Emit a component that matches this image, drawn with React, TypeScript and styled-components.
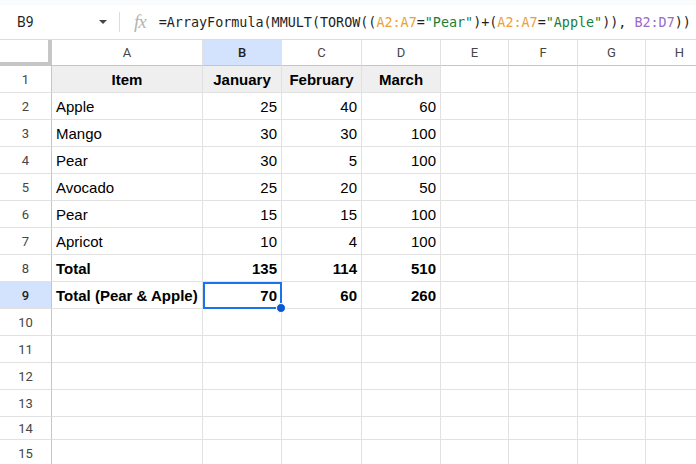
import React from "react";
import styled, { createGlobalStyle, css } from "styled-components";

const GlobalStyle = createGlobalStyle`
  body {
    margin: 0;
    background: #ffffff;
    overflow: hidden;
  }
`;

const Page = styled.div`
  width: 696px;
  height: 464px;
  overflow: hidden;
  background: #fff;
  font-family: Roboto, "Liberation Sans", Arial, sans-serif;
`;

const TopStrip = styled.div`
  height: 5px;
  background: #f9fbfd;
`;

const FormulaBar = styled.div`
  display: flex;
  align-items: center;
  height: 34px;
  border-bottom: 1px solid #dadce0;
  background: #fff;
`;

const NameBox = styled.div`
  width: 93px;
  padding-left: 17px;
  box-sizing: border-box;
  font-size: 14px;
  color: #1f1f1f;
`;

const Caret = styled.div`
  width: 0;
  height: 0;
  border-left: 4px solid transparent;
  border-right: 4px solid transparent;
  border-top: 4px solid #444746;
  margin-left: 6px;
`;

const Divider = styled.div`
  width: 1px;
  height: 20px;
  background: #dadce0;
  margin-left: 12px;
`;

const Fx = styled.span`
  font-family: "Liberation Serif", serif;
  font-style: italic;
  font-size: 19px;
  color: #b4b4b4;
  margin-left: 14px;
  letter-spacing: -1px;
`;

const Formula = styled.div`
  margin-left: 13px;
  font-family: "DejaVu Sans Mono", "Liberation Mono", monospace;
  font-size: 13.4px;
  color: #1f1f1f;
  white-space: nowrap;
`;

const Tok = styled.span<{ $c: string }>`
  color: ${(p) => p.$c};
`;

const Grid = styled.div`
  display: grid;
  grid-template-columns: 52px 151px 79px 80px 79px 68px 69px 68px 68px;
  grid-template-rows: 26px repeat(13, 27px) 23px 27px;
  width: 714px;
`;

const ColHead = styled.div<{ $active?: boolean }>`
  box-sizing: border-box;
  border-right: 1px solid #e1e1e1;
  border-bottom: 1px solid #c4c7c5;
  display: flex;
  align-items: center;
  justify-content: center;
  font-size: 13px;
  color: #444746;
  background: ${(p) => (p.$active ? "#d3e3fd" : "#fff")};
  ${(p) =>
    p.$active &&
    css`
      color: #1f1f1f;
      font-weight: 500;
    `}
`;

const Corner = styled.div`
  box-sizing: border-box;
  border-right: 4px solid #c4c7c5;
  border-bottom: 4px solid #c4c7c5;
  background: #fff;
`;

const RowHead = styled.div<{ $active?: boolean }>`
  box-sizing: border-box;
  border-right: 1px solid #c4c7c5;
  border-bottom: 1px solid #e1e1e1;
  display: flex;
  align-items: center;
  justify-content: center;
  font-size: 13px;
  color: ${(p) => (p.$active ? "#1f1f1f" : "#444746")};
  font-weight: ${(p) => (p.$active ? 500 : 400)};
  background: ${(p) => (p.$active ? "#d3e3fd" : "#fff")};
`;

const Cell = styled.div<{ $num?: boolean; $bold?: boolean; $head?: boolean; $sel?: boolean }>`
  position: relative;
  box-sizing: border-box;
  border-right: 1px solid #e1e1e1;
  border-bottom: 1px solid #e1e1e1;
  display: flex;
  align-items: center;
  padding: 0 4px;
  font-family: "Liberation Sans", Arial, sans-serif;
  font-size: 15px;
  color: #000;
  white-space: nowrap;
  justify-content: ${(p) => (p.$head ? "center" : p.$num ? "flex-end" : "flex-start")};
  font-weight: ${(p) => (p.$bold || p.$head ? 700 : 400)};
  background: ${(p) => (p.$head ? "#efefef" : "#fff")};
  ${(p) =>
    p.$sel &&
    css`
      outline: 2px solid #1a73e8;
      outline-offset: -2px;
    `}
`;

const Handle = styled.div`
  position: absolute;
  right: -5px;
  bottom: -5px;
  width: 8px;
  height: 8px;
  border-radius: 50%;
  background: #0b57d0;
  border: 1px solid #fff;
  z-index: 2;
`;

const cols = ["A", "B", "C", "D", "E", "F", "G", "H"];

type Row = { cells: (string | number)[]; bold?: boolean; head?: boolean };

const data: Row[] = [
  { cells: ["Item", "January", "February", "March"], head: true },
  { cells: ["Apple", 25, 40, 60] },
  { cells: ["Mango", 30, 30, 100] },
  { cells: ["Pear", 30, 5, 100] },
  { cells: ["Avocado", 25, 20, 50] },
  { cells: ["Pear", 15, 15, 100] },
  { cells: ["Apricot", 10, 4, 100] },
  { cells: ["Total", 135, 114, 510], bold: true },
  { cells: ["Total (Pear & Apple)", 70, 60, 260], bold: true },
];

const ORANGE = "#e8a13a";
const GREEN = "#188038";
const PURPLE = "#9a6bc9";

export default function App() {
  const rows: Row[] = [...data];
  while (rows.length < 15) rows.push({ cells: [] });

  return (
    <Page>
      <GlobalStyle />
      <TopStrip />
      <FormulaBar>
        <NameBox>B9</NameBox>
        <Caret />
        <Divider />
        <Fx>fx</Fx>
        <Formula>
          =ArrayFormula(MMULT(TOROW((<Tok $c={ORANGE}>A2:A7</Tok>=<Tok $c={GREEN}>"Pear"</Tok>)+(
          <Tok $c={ORANGE}>A2:A7</Tok>=<Tok $c={GREEN}>"Apple"</Tok>)), <Tok $c={PURPLE}>B2:D7</Tok>))
        </Formula>
      </FormulaBar>
      <Grid>
        <Corner />
        {cols.map((c) => (
          <ColHead key={c} $active={c === "B"}>
            {c}
          </ColHead>
        ))}
        {rows.map((row, r) => (
          <React.Fragment key={r}>
            <RowHead $active={r === 8}>{r + 1}</RowHead>
            {cols.map((c, ci) => {
              const v = row.cells[ci];
              const sel = r === 8 && ci === 1;
              return (
                <Cell
                  key={c}
                  $num={typeof v === "number"}
                  $bold={row.bold}
                  $head={row.head && ci < 4}
                  $sel={sel}
                >
                  {v}
                  {sel && <Handle />}
                </Cell>
              );
            })}
          </React.Fragment>
        ))}
      </Grid>
    </Page>
  );
}
